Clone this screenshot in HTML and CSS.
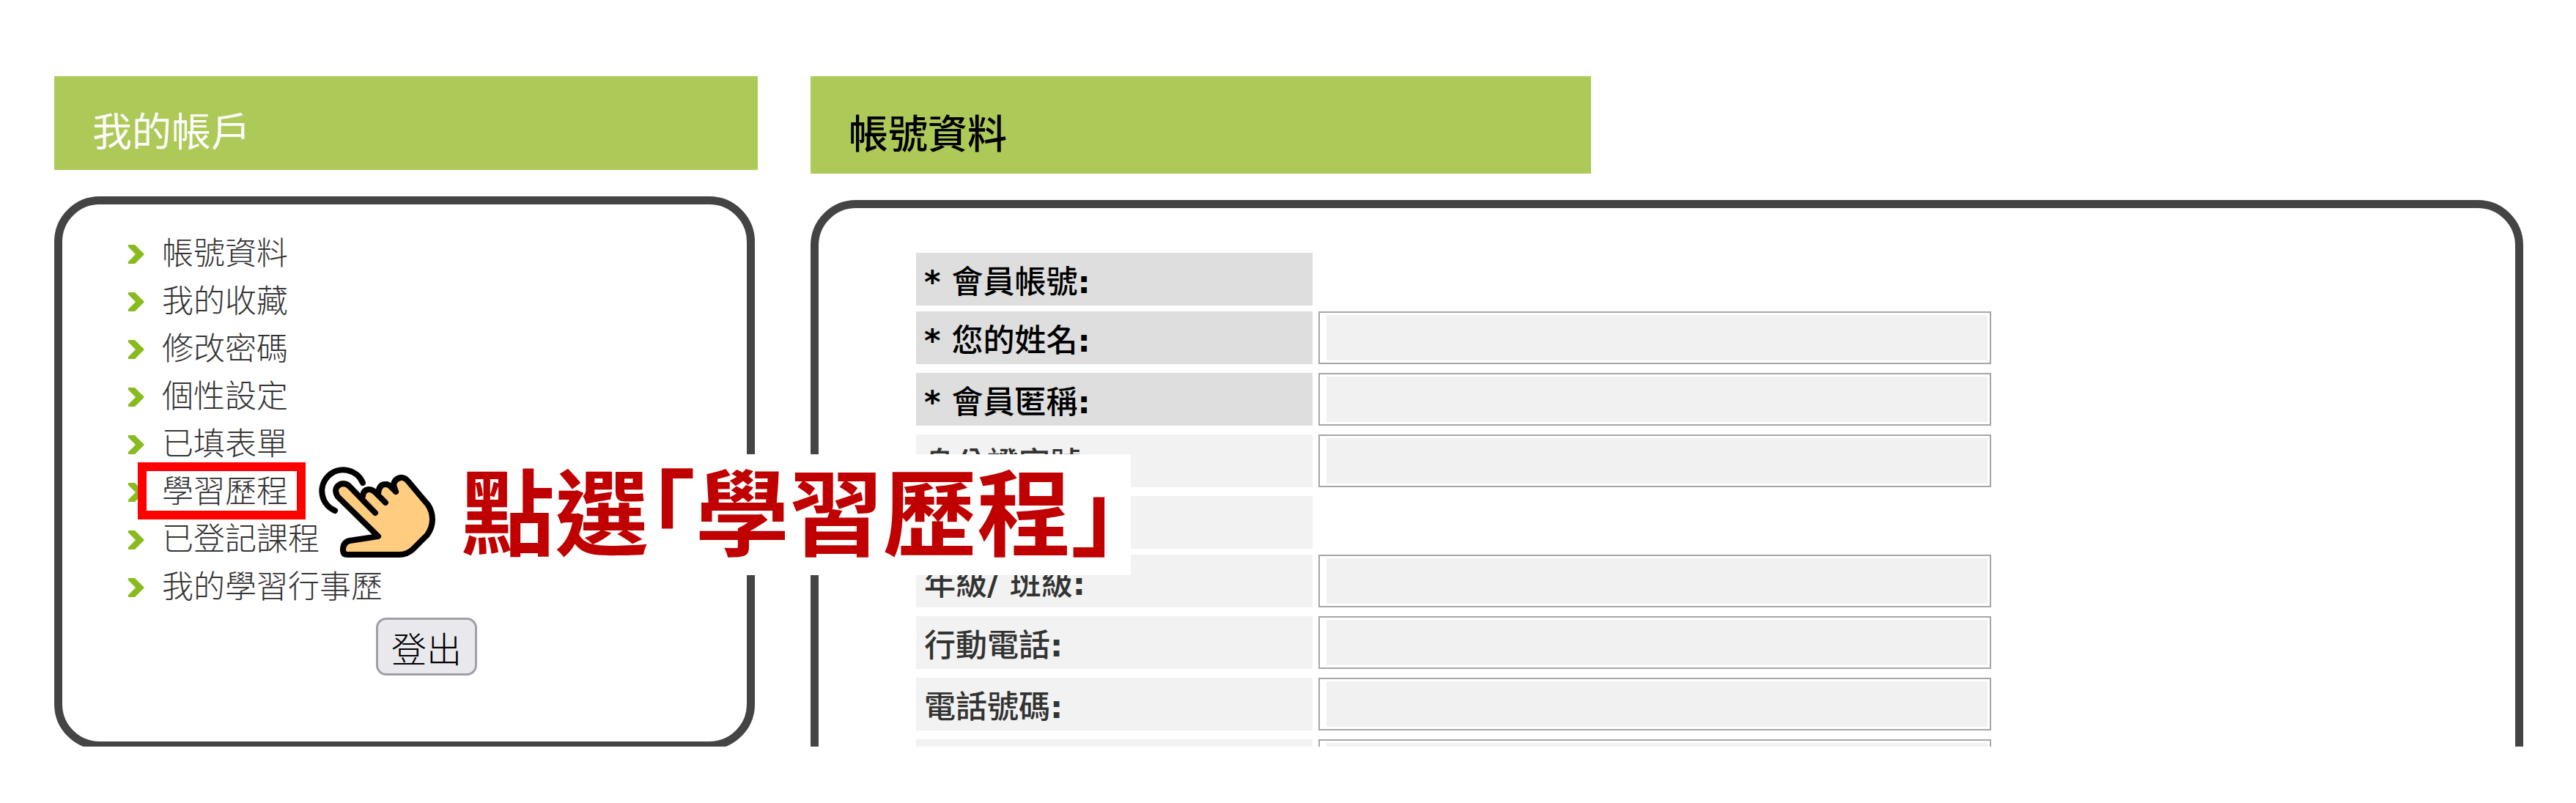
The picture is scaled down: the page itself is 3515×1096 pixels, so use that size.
FILE: index.html
```html
<!DOCTYPE html>
<html lang="zh-Hant">
<head>
    <meta charset="UTF-8">
    <meta name="viewport" content="width=device-width, initial-scale=1.0">
    <title>帳號資料</title>
    <link rel="stylesheet" href="styles.css">
</head>
<body>
    <div class="page">
        <aside class="sidebar">
            <h2 class="title title-side">我的帳戶</h2>
            <div class="panel panel-side">
                <ul class="menu">
                    <li><svg class="arrow" viewBox="0 0 22 26"><path d="M0 0h9l13 13-13 13H0v-3l10-10L0 3z"/></svg><a href="#">帳號資料</a></li>
                    <li><svg class="arrow" viewBox="0 0 22 26"><path d="M0 0h9l13 13-13 13H0v-3l10-10L0 3z"/></svg><a href="#">我的收藏</a></li>
                    <li><svg class="arrow" viewBox="0 0 22 26"><path d="M0 0h9l13 13-13 13H0v-3l10-10L0 3z"/></svg><a href="#">修改密碼</a></li>
                    <li><svg class="arrow" viewBox="0 0 22 26"><path d="M0 0h9l13 13-13 13H0v-3l10-10L0 3z"/></svg><a href="#">個性設定</a></li>
                    <li><svg class="arrow" viewBox="0 0 22 26"><path d="M0 0h9l13 13-13 13H0v-3l10-10L0 3z"/></svg><a href="#">已填表單</a></li>
                    <li><svg class="arrow" viewBox="0 0 22 26"><path d="M0 0h9l13 13-13 13H0v-3l10-10L0 3z"/></svg><a href="#" class="marked">學習歷程</a></li>
                    <li><svg class="arrow" viewBox="0 0 22 26"><path d="M0 0h9l13 13-13 13H0v-3l10-10L0 3z"/></svg><a href="#">已登記課程</a></li>
                    <li><svg class="arrow" viewBox="0 0 22 26"><path d="M0 0h9l13 13-13 13H0v-3l10-10L0 3z"/></svg><a href="#">我的學習行事歷</a></li>
                </ul>
                <button type="button" class="logout">登出</button>
            </div>
        </aside>

        <main class="content">
            <h2 class="title title-main">帳號資料</h2>
            <div class="panel panel-main">
                <form class="account">
                    <div class="row row-plain">
                        <div class="label required"><b>* </b>會員帳號<b>:</b></div>
                    </div>
                    <div class="row">
                        <label class="label required" for="name"><b>* </b>您的姓名<b>:</b></label>
                        <input type="text" id="name">
                    </div>
                    <div class="row">
                        <label class="label required" for="nickname"><b>* </b>會員匿稱<b>:</b></label>
                        <input type="text" id="nickname">
                    </div>
                    <div class="row">
                        <label class="label" for="idno">身分證字號<b>:</b></label>
                        <input type="text" id="idno">
                    </div>
                    <div class="row row-plain">
                        <div class="label"></div>
                    </div>
                    <div class="row">
                        <label class="label" for="grade">年級<b>/ </b>班級<b>:</b></label>
                        <input type="text" id="grade">
                    </div>
                    <div class="row">
                        <label class="label" for="mobile">行動電話<b>:</b></label>
                        <input type="text" id="mobile">
                    </div>
                    <div class="row">
                        <label class="label" for="phone">電話號碼<b>:</b></label>
                        <input type="text" id="phone">
                    </div>
                    <div class="row">
                        <div class="label"></div>
                        <input type="text" id="extra" aria-label="其他">
                    </div>
                </form>
            </div>
        </main>

        <!-- step hint -->
        <div class="hint">點選「學習歷程」</div>
        <svg class="hand" viewBox="0 0 168 134">
            <path class="skin" d="M32 48L86 101L47 105Q38 108 38 119Q38 126 44 126H115Q124 126 132 118L153 98Q160 88 160 77Q160 66 154 57L127 24Q122 19 116 20Q109 22 108 30Q104 26 98 28Q89 29 87 37Q82 33 75 35Q66 36 63 45L48 29Q42 24 34 28Q25 34 30 45Z"/>
            <path d="M65 27A29 29 0 1 0 27 65"/>
            <path d="M82 68L48 33Q42 26 34 29Q24 35 31 46L86 100L47 106Q38 108 38 119Q38 125 44 125H115Q125 125 133 118L153 98Q160 88 160 77Q160 66 154 57L127 25Q122 19 116 20Q108 22 107 30L110 39"/>
            <path d="M65 45Q66 36 74 36Q78 36 82 40L96 54M86 42Q87 29 96 29Q101 29 104 33L110 39"/>
        </svg>
    </div>
</body>
</html>
```
FILE: styles.css
```css
* {
    box-sizing: border-box;
}

body {
    margin: 0;
    background-color: #fff;
    font-family: "DejaVu Sans", "Noto Sans CJK TC", sans-serif;
    color: #333;
}

.page {
    position: relative;
    display: grid;
    grid-template-columns: 960fr 2337fr;
    column-gap: 72px;
    align-items: start;
    height: calc(100vh - 77px);
    padding: 104px 72px 0 74px;
    overflow: hidden;
}

.title {
    display: flex;
    align-items: center;
    margin: 0 0 36px;
    padding: 28px 52px 0;
    background-color: #adca59;
    font-size: 54px;
    line-height: 64px;
    font-weight: 400;
}

.title-side {
    height: 128px;
    color: #fff;
}

.title-main {
    width: 1065px;
    max-width: 100%;
    height: 133px;
    color: #000;
    font-weight: 500;
}

.panel {
    border: 11px solid #444;
    border-radius: 62px;
}

.panel-side {
    margin-right: 4px;
    padding: 35px 30px 90px 90px;
    text-align: center;
}

.panel-main {
    padding: 61px 133px;
}

.menu {
    margin: 0 0 9px;
    padding: 0;
    list-style: none;
    font-size: 43px;
    line-height: 65px;
}

.menu li {
    display: flex;
    align-items: center;
    gap: 24px;
}

.menu a {
    color: #333;
    font-weight: 300;
    text-decoration: none;
}

.arrow {
    width: 22px;
    height: 26px;
    fill: #87bb1e;
}

.marked {
    position: relative;
}

.marked::after {
    content: "";
    position: absolute;
    inset: -8px -24px -5px -33px;
    border: 12px solid #f00;
}

.logout {
    height: 79px;
    padding: 8px 18px 0;
    background-color: #e9e9ed;
    border: 3px solid #9f9fa8;
    border-radius: 14px;
    color: #000;
    font-family: inherit;
    font-size: 48px;
    font-weight: 300;
    line-height: 64px;
    cursor: pointer;
}

.account {
    max-width: 1467px;
}

.row {
    display: grid;
    grid-template-columns: 541fr 918fr;
    column-gap: 8px;
    margin-bottom: 12px;
}

.row-plain {
    margin-bottom: 8px;
}

.label {
    height: 72px;
    padding: 6px 11px 0;
    background-color: #f2f2f2;
    font-size: 43px;
    font-weight: 500;
    line-height: 68px;
}

.label b {
    font-weight: 700;
}

.required {
    background-color: #dedede;
    color: #000;
}

.row input {
    width: 100%;
    height: 72px;
    padding: 3px 3px 3px 9px;
    background-color: #f1f1f1;
    background-clip: content-box;
    border: 2px solid #a6a6a6;
    border-radius: 0;
    font-size: 43px;
}

/* hint over the menu */
.hint {
    position: absolute;
    left: 600px;
    top: 620px;
    height: 165px;
    padding: 0 18px 0 29px;
    background-color: #fff;
    color: #c00000;
    font-family: "Noto Sans CJK TC", sans-serif;
    font-size: 128px;
    font-weight: 700;
    line-height: 148px;
    white-space: nowrap;
    font-feature-settings: "halt";
}

.hand {
    position: absolute;
    left: 430px;
    top: 632px;
    width: 168px;
    height: 134px;
    fill: none;
    stroke: #000;
    stroke-width: 8;
    stroke-linecap: round;
    stroke-linejoin: round;
}

.hand .skin {
    fill: #ffcc80;
    stroke: none;
}
```
